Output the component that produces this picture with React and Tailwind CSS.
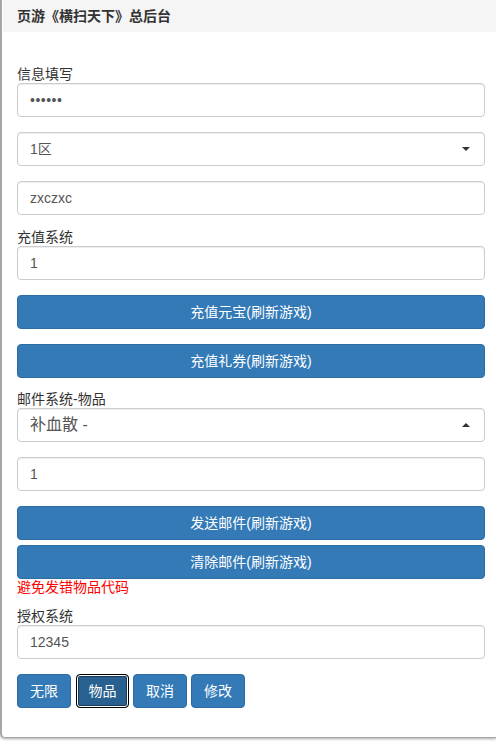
import React from "react";

const font = { fontFamily: '"Liberation Sans", "Noto Sans CJK SC", sans-serif' };

function Label({ children, className = "" }) {
  return <div className={"h-[17px] leading-[17px] text-[14px] text-[#333] " + className}>{children}</div>;
}

function Field({ children, className = "" }) {
  return (
    <div className={"h-[34px] w-full rounded-[4px] border border-[#ccc] bg-white px-[12px] flex items-center text-[14px] text-[#555] shadow-[inset_0_1px_1px_rgba(0,0,0,0.075)] " + className}>
      {children}
    </div>
  );
}

function Select({ children, up, className = "" }) {
  return (
    <Field className={"justify-between text-[#333] " + className}>
      <span>{children}</span>
      <span
        className={
          "mr-[2px] h-0 w-0 border-x-[4px] border-x-transparent " +
          (up ? "border-b-[4px] border-b-[#333]" : "border-t-[4px] border-t-[#333]")
        }
      />
    </Field>
  );
}

function Btn({ children, className = "" }) {
  return (
    <button className={"h-[34px] w-full rounded-[4px] border border-[#2e6da4] bg-[#337ab7] text-[14px] text-white " + className}>
      {children}
    </button>
  );
}

export default function App() {
  return (
    <div className="w-[496px] h-[741px] overflow-hidden bg-white" style={font}>
      <div className="border-l-2 border-b border-[#a6a6a6] rounded-bl-[5px] shadow-[0_1px_3px_rgba(0,0,0,0.35)] bg-white">
        <div className="h-[32px] bg-[#f5f5f5] ml-[1px] rounded-bl-[2px] pl-[14px] flex items-center text-[14px] font-bold text-[#333]">
          页游《横扫天下》总后台
        </div>
        <div className="pl-[15px] pr-[11px] pt-[34px] pb-[29px] flex flex-col">
          <Label>信息填写</Label>
          <Field>
            <span className="tracking-[0.5px]">••••••</span>
          </Field>
          <Select className="mt-[15px]">1区</Select>
          <Field className="mt-[15px] text-[13px]">zxczxc</Field>

          <Label className="mt-[14px]">充值系统</Label>
          <Field>1</Field>
          <Btn className="mt-[15px]">充值元宝(刷新游戏)</Btn>
          <Btn className="mt-[15px]">充值礼券(刷新游戏)</Btn>

          <Label className="mt-[13px]">邮件系统-物品</Label>
          <Select up className="text-[16px]">补血散 -</Select>
          <Field className="mt-[15px]">1</Field>
          <Btn className="mt-[15px]">发送邮件(刷新游戏)</Btn>
          <Btn className="mt-[5px]">清除邮件(刷新游戏)</Btn>
          <div className="h-[17px] leading-[17px] text-[14px] text-[#ff0000]">避免发错物品代码</div>

          <Label className="mt-[12px]">授权系统</Label>
          <Field>12345</Field>

          <div className="mt-[15px] flex">
            <Btn className="!w-[54px]">无限</Btn>
            <button className="ml-[5px] h-[34px] w-[53px] rounded-[4px] border border-black bg-[#286090] text-[14px] text-white shadow-[inset_0_0_0_1px_#fff,inset_0_0_0_2px_#1b3a57]">
              物品
            </button>
            <Btn className="ml-[4px] !w-[54px]">取消</Btn>
            <Btn className="ml-[4px] !w-[54px]">修改</Btn>
          </div>
        </div>
      </div>
    </div>
  );
}
